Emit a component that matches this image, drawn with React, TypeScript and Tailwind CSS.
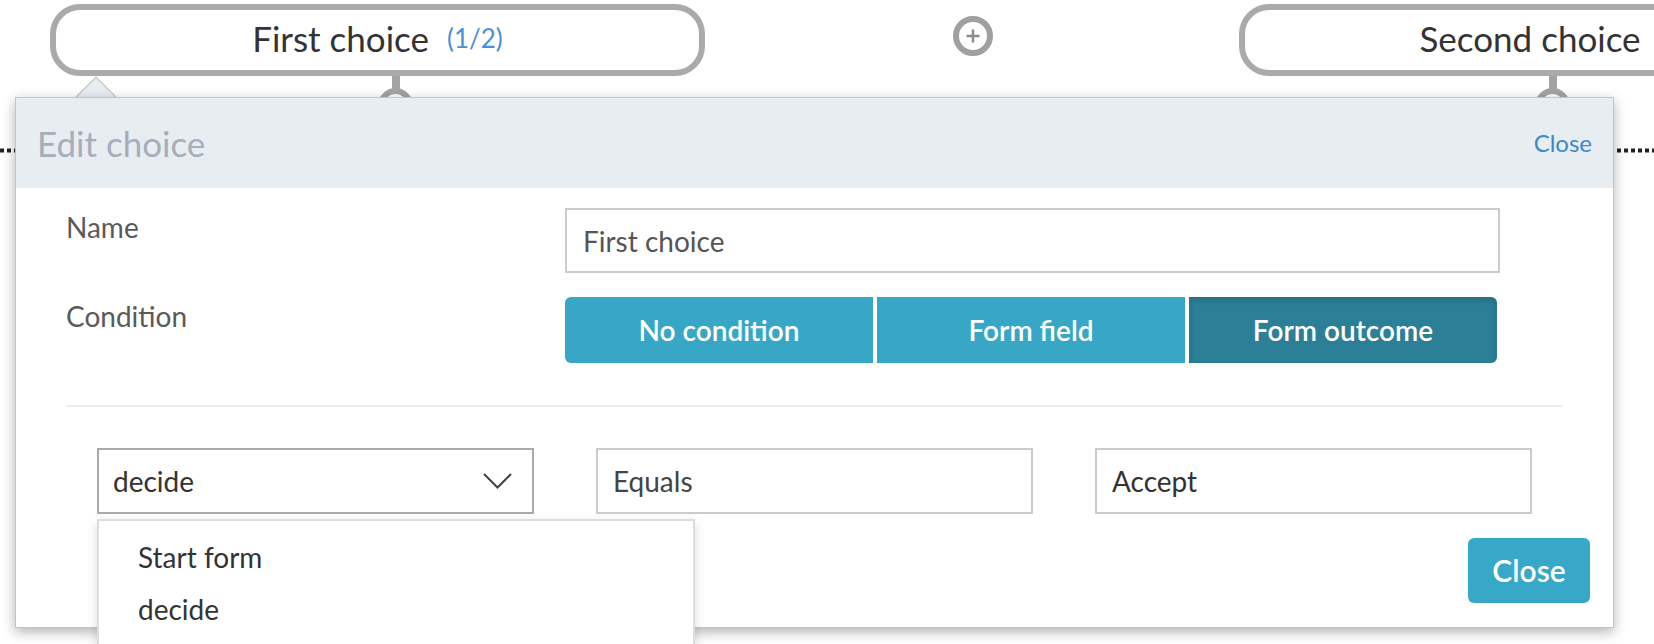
import { useState } from "react";

const conditions = ["No condition", "Form field", "Form outcome"];

function Connector({ left }: { left: number }) {
  return (
    <div className="absolute top-[76px] flex flex-col items-center" style={{ left }}>
      <div className="h-[14px] w-[8px] bg-[#a3a3a3]" />
      <div className="-mt-[2px] h-[35px] w-[35px] rounded-full border-[6px] border-[#a3a3a3] bg-white" />
    </div>
  );
}

export default function App() {
  const [active] = useState("Form outcome");

  return (
    <div className="relative h-[644px] w-[1654px] overflow-hidden bg-white font-['Lato','Noto_Sans',sans-serif]">
      {/* diagram behind the editor */}
      <svg className="absolute left-0 top-[148px]" width="1654" height="5">
        <line x1="0" y1="2.5" x2="1654" y2="2.5" stroke="#222" strokeWidth="4" strokeDasharray="4 3" />
      </svg>

      <div className="absolute left-[50px] top-[4px] flex h-[72px] w-[655px] items-center justify-center rounded-[30px] border-[6px] border-[#aaaaaa] bg-white pb-[4px]">
        <span className="text-[35px] leading-none text-[#333]">First choice</span>
        <span className="ml-[18px] text-[26px] leading-none text-[#4a8fdb]">(1/2)</span>
      </div>
      <Connector left={378} />

      <div className="absolute left-[953px] top-[16px] flex h-[40px] w-[40px] items-center justify-center rounded-full border-[6px] border-[#a0a0a0] bg-white">
        <svg width="16" height="16" viewBox="0 0 16 16">
          <path d="M8 1.5v13M1.5 8h13" stroke="#8c8c8c" strokeWidth="2.5" />
        </svg>
      </div>

      <div className="absolute left-[1239px] top-[4px] flex h-[72px] w-[582px] items-center justify-center rounded-[30px] border-[6px] border-[#aaaaaa] bg-white pb-[4px]">
        <span className="text-[35px] leading-none text-[#333]">Second choice</span>
      </div>
      <Connector left={1535} />

      {/* popover pointer */}
      <svg className="absolute left-[74px] top-[76px]" width="44" height="23">
        <polygon points="1,22 22,1 43,22" fill="#e8edf1" stroke="#c4c4c4" strokeWidth="1.2" />
      </svg>

      {/* edit panel */}
      <div className="absolute left-[15px] top-[97px] h-[531px] w-[1599px] border border-[#c4c4c4] bg-white shadow-[0_4px_12px_rgba(0,0,0,0.3)]">
        <div className="flex h-[90px] items-center justify-between bg-[#e8edf1] px-[21px]">
          <span className="text-[35px] text-[#a6aebb]">Edit choice</span>
          <span className="text-[24px] text-[#3a89cf]">Close</span>
        </div>

        <div className="px-[50px] pt-[20px]">
          <div className="flex items-start">
            <div className="w-[499px] text-[28px] leading-[38px] text-[#5a5a5a]">Name</div>
            <div className="flex h-[65px] w-[935px] items-center border-2 border-[#cccccc] px-[16px] text-[28px] text-[#555]">
              First choice
            </div>
          </div>

          <div className="mt-[24px] flex items-start">
            <div className="w-[499px] text-[28px] leading-[38px] text-[#5a5a5a]">Condition</div>
            <div className="flex h-[66px] w-[932px] gap-[4px]">
              {conditions.map((c, i) => (
                <div
                  key={c}
                  className={
                    "flex flex-1 items-center justify-center text-[28px] font-semibold text-white " +
                    (c === active
                      ? "bg-[#2b7f97] shadow-[inset_0_3px_6px_rgba(0,0,0,0.15)] "
                      : "bg-[#38a7c6] ") +
                    (i === 0 ? "rounded-l-[6px]" : i === 2 ? "rounded-r-[6px]" : "")
                  }
                >
                  {c}
                </div>
              ))}
            </div>
          </div>

          <div className="mt-[42px] h-[2px] bg-[#eeeeee]" />

          <div className="relative mt-[41px] grid grid-cols-3 gap-[62px] px-[31px]">
            <div className="flex h-[66px] items-center justify-between border-2 border-[#aaaaaa] pl-[14px] pr-[20px] text-[28px] text-[#333]">
              <span>decide</span>
              <svg width="29" height="16" viewBox="0 0 29 16">
                <polyline points="1,1 14.5,14.5 28,1" fill="none" stroke="#444" strokeWidth="2" />
              </svg>
            </div>
            <div className="flex h-[66px] items-center border-2 border-[#cccccc] px-[15px] text-[28px] text-[#444]">
              Equals
            </div>
            <div className="flex h-[66px] items-center border-2 border-[#cccccc] px-[15px] text-[28px] text-[#333]">
              Accept
            </div>

            {/* open dropdown menu */}
            <div className="absolute left-[31px] top-[71px] z-10 h-[140px] w-[598px] border-2 border-[#dddddd] bg-white pt-[10px] shadow-[0_4px_10px_rgba(0,0,0,0.15)]">
              {["Start form", "decide"].map((o) => (
                <div key={o} className="flex h-[52px] items-center pl-[39px] text-[28px] text-[#333]">
                  {o}
                </div>
              ))}
            </div>
          </div>
        </div>

        <div className="mt-[24px] flex justify-end pr-[23px]">
          <button className="h-[65px] w-[122px] rounded-[6px] bg-[#38a8c8] text-[30px] font-semibold text-white">
            Close
          </button>
        </div>
      </div>
    </div>
  );
}
